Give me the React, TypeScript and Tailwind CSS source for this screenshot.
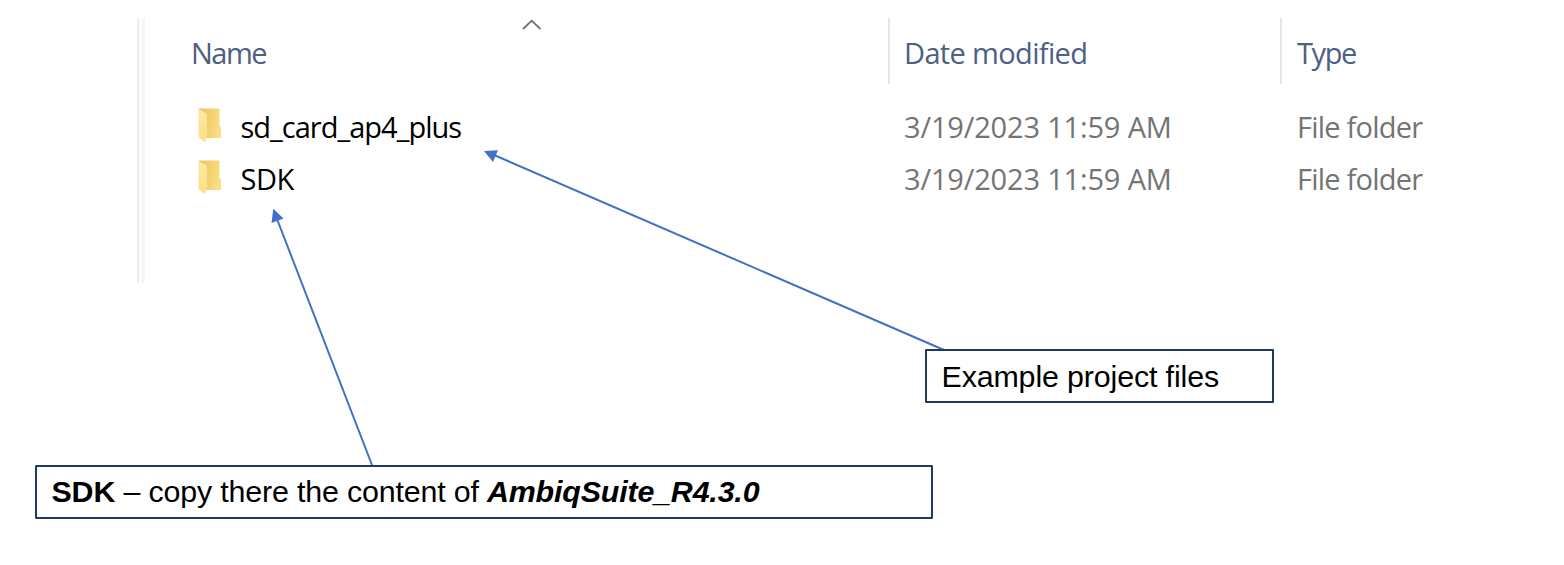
import type { ReactNode } from "react";

const rows = [
  { name: "sd_card_ap4_plus", spacing: "tracking-[-0.98px]", date: "3/19/2023 11:59 AM", type: "File folder" },
  { name: "SDK", spacing: "tracking-[-0.5px]", date: "3/19/2023 11:59 AM", type: "File folder" },
];

function FolderIcon() {
  return (
    <svg className="mb-[2px] h-9 w-6 shrink-0" viewBox="0 0 24 36" aria-hidden="true">
      <defs>
        <linearGradient id="folder-back" x1="0" y1="0" x2="1" y2="0.25">
          <stop offset="0" stopColor="#e8c35c" />
          <stop offset="1" stopColor="#fbdc80" />
        </linearGradient>
        <linearGradient id="folder-front" x1="0" y1="0" x2="0" y2="1">
          <stop offset="0" stopColor="#fee9a8" />
          <stop offset="1" stopColor="#fddd86" />
        </linearGradient>
      </defs>
      <path d="M1 .5h20.500v17.500l1.500 1.500v10.500H7L1 27z" fill="url(#folder-back)" />
      <path d="M.5 1 8 5.2Q9 6 9 8v20l-1.600 2v4.500L1.500 30Q.5 29 .5 27z" fill="url(#folder-front)" />
    </svg>
  );
}

function Callout({ className, children }: { className: string; children: ReactNode }) {
  return (
    <div className={`absolute flex h-[54px] items-center whitespace-pre rounded-[1px] border-2 border-[#1f3864] bg-white pl-[14.5px] font-['Liberation_Sans',Arial,sans-serif] text-[30.4px] leading-[34px] text-black ${className}`}>
      {children}
    </div>
  );
}

export default function App() {
  return (
    <main className="relative h-[565px] w-[1564px] overflow-hidden bg-white pl-[137px] pt-[18px] font-['Open_Sans','Segoe_UI',sans-serif] text-[29px] leading-10">
      <section className="flex h-[265px]">
        <div className="w-2 shrink-0 border-l-2 border-r-3 border-l-[#ededed] border-r-[#f6f6f6]" />
        <div className="flex flex-1 flex-col">
          <header className="grid h-[66px] grid-cols-[743px_392px_1fr] text-[#4d6083]">
            <div className="relative pl-[46px] pt-[15px] tracking-[-1.5px]">
              Name
              <svg className="absolute left-[377px] top-0 h-3 w-5" viewBox="0 0 20 12" aria-hidden="true">
                <path d="m1 11 8.700-8.300 8.700 8.300" fill="none" stroke="#707070" strokeWidth="1.8" />
              </svg>
            </div>
            <div className="border-l-2 border-[#e6e6e6] pl-[14px] pt-[15px] tracking-[-0.65px]">Date modified</div>
            <div className="border-l-2 border-[#e6e6e6] pl-[15px] pt-[15px] tracking-[-1.4px]">Type</div>
          </header>
          <div className="pt-[17px]">
            {rows.map((row) => (
              <div key={row.name} className="grid h-[52px] grid-cols-[743px_392px_1fr] items-center text-[#747474]">
                <div className={`flex items-center gap-[18.5px] pl-[53px] text-black ${row.spacing}`}>
                  <FolderIcon />
                  <span>{row.name}</span>
                </div>
                <span className="pl-[16px] tracking-[-0.17px]">{row.date}</span>
                <span className="pl-[17px] tracking-[-0.78px]">{row.type}</span>
              </div>
            ))}
          </div>
        </div>
      </section>

      <svg className="pointer-events-none absolute inset-0 h-full w-full" viewBox="0 0 1564 565" aria-hidden="true">
        <g stroke="#4270c4" strokeWidth="2">
          <path d="M944 350 494 155" />
          <path d="M372 465 277 219" />
        </g>
        <g fill="#4270c4">
          <path d="m484 151 14-.8-5 11.800z" />
          <path d="m273.300 208.700 10.200 9.800-12 4.500z" />
        </g>
      </svg>

      <Callout className="left-[925px] top-[349px] w-[349px] tracking-[-0.14px]">Example project files</Callout>
      <Callout className="left-[35px] top-[465px] w-[898px] pb-[2px] tracking-[-0.17px]">
        <span><b>SDK</b> – copy there the content of <b><i>AmbiqSuite_R4.3.0</i></b></span>
      </Callout>
    </main>
  );
}
